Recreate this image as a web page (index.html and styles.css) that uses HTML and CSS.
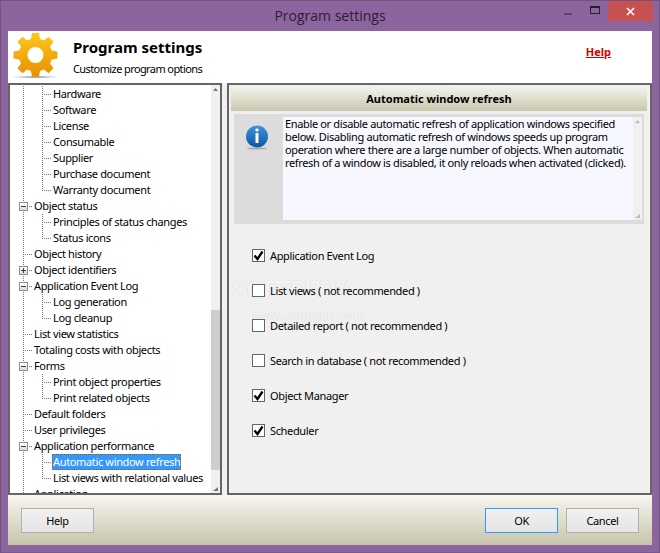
FILE: index.html
```html
<!DOCTYPE html>
<html>
<head>
<meta charset="utf-8">
<title>Program settings</title>
<link rel="stylesheet" href="styles.css">
</head>
<body>
<div class="window">
  <div class="titlebar">
    <div class="title">Program settings</div>
    <div class="controls">
      <div class="ctl"><svg width="10" height="10"><rect x="0" y="7" width="8" height="2" fill="#5b4a66"/></svg></div>
      <div class="ctl"><svg width="10" height="10"><rect x="0.5" y="0.5" width="9" height="7" fill="none" stroke="#222"/><rect x="0" y="0" width="10" height="2" fill="#222"/></svg></div>
      <div class="close"><svg width="9" height="9"><path d="M1 1L8 8M8 1L1 8" stroke="#fff" stroke-width="1.6"/></svg></div>
    </div>
  </div>
  <div class="client">
    <div class="header">
      <svg class="gear" width="48" height="48" viewBox="0 0 48 48">
        <defs>
          <linearGradient id="gg" x1="0" y1="0" x2="0" y2="1"><stop offset="0" stop-color="#ffc81a"/><stop offset="1" stop-color="#e88f00"/></linearGradient>
          <radialGradient id="sh"><stop offset="0" stop-color="#777"/><stop offset="1" stop-color="#ccc" stop-opacity="0.2"/></radialGradient>
        </defs>
        <ellipse cx="23.500" cy="45" rx="23" ry="1.600" fill="url(#sh)"/>
        <path fill="url(#gg)" fill-rule="evenodd" d="M20 1h7l1 6 4 1.600 4.500-3.900 5 5-3.500 4.800 1.700 4 5.800 1v7l-5.800 1-1.700 4 3.500 4.800-5 5-4.500-3.900-4 1.600-1 5.500h-7l-1-5.500-4-1.600-4.500 3.900-5-5 3.500-4.800-1.700-4-5.800-1v-7l5.800-1 1.700-4-3.500-4.800 5-5 4.500 3.900 4-1.600zM23.500 15a8 8 0 1 0 0 16 8 8 0 0 0 0-16z"/>
      </svg>
      <div class="head-text">
        <div class="head-title">Program settings</div>
        <div class="head-sub">Customize program options</div>
      </div>
      <a class="head-help">Help</a>
    </div>
    <div class="panes">
      <div class="tree-pane">
        <div class="tree">
          <div class="row"><i class="c v"></i><i class="c t"></i><span class="lb">Hardware</span></div>
          <div class="row"><i class="c v"></i><i class="c t"></i><span class="lb">Software</span></div>
          <div class="row"><i class="c v"></i><i class="c t"></i><span class="lb">License</span></div>
          <div class="row"><i class="c v"></i><i class="c t"></i><span class="lb">Consumable</span></div>
          <div class="row"><i class="c v"></i><i class="c t"></i><span class="lb">Supplier</span></div>
          <div class="row"><i class="c v"></i><i class="c t"></i><span class="lb">Purchase document</span></div>
          <div class="row"><i class="c v"></i><i class="c l"></i><span class="lb">Warranty document</span></div>
          <div class="row"><i class="c t"><b class="box minus"></b></i><span class="lb">Object status</span></div>
          <div class="row"><i class="c v"></i><i class="c t"></i><span class="lb">Principles of status changes</span></div>
          <div class="row"><i class="c v"></i><i class="c l"></i><span class="lb">Status icons</span></div>
          <div class="row"><i class="c t"></i><span class="lb">Object history</span></div>
          <div class="row"><i class="c t"><b class="box plus"></b></i><span class="lb">Object identifiers</span></div>
          <div class="row"><i class="c t"><b class="box minus"></b></i><span class="lb">Application Event Log</span></div>
          <div class="row"><i class="c v"></i><i class="c t"></i><span class="lb">Log generation</span></div>
          <div class="row"><i class="c v"></i><i class="c l"></i><span class="lb">Log cleanup</span></div>
          <div class="row"><i class="c t"></i><span class="lb">List view statistics</span></div>
          <div class="row"><i class="c t"></i><span class="lb">Totaling costs with objects</span></div>
          <div class="row"><i class="c t"><b class="box minus"></b></i><span class="lb">Forms</span></div>
          <div class="row"><i class="c v"></i><i class="c t"></i><span class="lb">Print object properties</span></div>
          <div class="row"><i class="c v"></i><i class="c l"></i><span class="lb">Print related objects</span></div>
          <div class="row"><i class="c t"></i><span class="lb">Default folders</span></div>
          <div class="row"><i class="c t"></i><span class="lb">User privileges</span></div>
          <div class="row"><i class="c t"><b class="box minus"></b></i><span class="lb">Application performance</span></div>
          <div class="row"><i class="c v"></i><i class="c t"></i><span class="lb sel">Automatic window refresh</span></div>
          <div class="row"><i class="c v"></i><i class="c l"></i><span class="lb">List views with relational values</span></div>
          <div class="row"><i class="c t"></i><span class="lb">Application</span></div>
        </div>
        <div class="vscroll">
          <svg class="arrow" width="9" height="9"><path d="M2 6L4.500 3L7 6z" fill="#777"/></svg>
          <div class="track"><div class="thumb"></div></div>
          <svg class="arrow" width="9" height="9"><path d="M2 7L7 3L7 7z" fill="#777"/></svg>
        </div>
      </div>
      <div class="page">
        <div class="page-title">Automatic window refresh</div>
        <div class="info">
          <div class="info-icon">
            <svg width="24" height="25" viewBox="0 0 24 25">
              <defs>
                <linearGradient id="ib" x1="0" y1="0" x2="0" y2="1"><stop offset="0" stop-color="#3f94dc"/><stop offset="1" stop-color="#0b57a4"/></linearGradient>
              </defs>
              <ellipse cx="12" cy="23.500" rx="10" ry="1" fill="#aaa"/>
              <circle cx="12" cy="11.500" r="11" fill="url(#ib)"/>
              <rect x="10.500" y="3.500" width="3" height="3" rx="1" fill="#fff"/>
              <rect x="10.500" y="8" width="3" height="10" fill="#fff"/>
            </svg>
          </div>
          <div class="info-text">Enable or disable automatic refresh of application windows specified below. Disabling automatic refresh of windows speeds up program operation where there are a large number of objects. When automatic refresh of a window is disabled, it only reloads when activated (clicked).</div>
          <div class="info-scroll">
            <svg width="9" height="9"><path d="M2 6L4.500 3L7 6z" fill="#bbb"/></svg>
            <svg width="9" height="9"><path d="M2 7L7 3L7 7z" fill="#bbb"/></svg>
          </div>
        </div>
        <div class="checks">
          <div class="check"><span class="cb"><svg width="11" height="11"><path d="M1.500 5.500L4.500 9L9.500 1.500" fill="none" stroke="#000" stroke-width="2.300"/></svg></span>Application Event Log</div>
          <div class="check"><span class="cb"></span>List views ( not recommended )</div>
          <div class="check"><span class="cb"></span>Detailed report ( not recommended )</div>
          <div class="check"><span class="cb"></span>Search in database ( not recommended )</div>
          <div class="check"><span class="cb"><svg width="11" height="11"><path d="M1.500 5.500L4.500 9L9.500 1.500" fill="none" stroke="#000" stroke-width="2.300"/></svg></span>Object Manager</div>
          <div class="check"><span class="cb"><svg width="11" height="11"><path d="M1.500 5.500L4.500 9L9.500 1.500" fill="none" stroke="#000" stroke-width="2.300"/></svg></span>Scheduler</div>
        </div>
        <div class="watermark">SOFTPEDIA<span class="wm-url">www.softpedia.com</span></div>
      </div>
    </div>
    <div class="footer">
      <button class="btn">Help</button>
      <div class="spacer"></div>
      <button class="btn default">OK</button>
      <button class="btn">Cancel</button>
    </div>
  </div>
</div>
</body>
</html>
```
FILE: styles.css
```css
html, body { margin: 0; padding: 0; }
body { width: 660px; height: 553px; overflow: hidden; font-family: "Noto Sans", sans-serif; font-size: 11px; letter-spacing: -0.35px; color: #000; }
.window { box-sizing: border-box; width: 660px; height: 553px; background: #8c659f; border: 1px solid #6f5580; border-bottom-color: #7a5a8c; padding: 0 7px 7px 7px; display: flex; flex-direction: column; }
.titlebar { height: 30px; flex: none; display: flex; align-items: flex-start; justify-content: center; position: relative; }
.title { font-family: "Open Sans", sans-serif; font-size: 14px; letter-spacing: 0; color: #2b2130; line-height: 29px; }
.controls { position: absolute; right: -1px; top: 0; display: flex; align-items: center; height: 20px; }
.ctl { width: 26px; height: 20px; display: flex; align-items: center; justify-content: center; }
.close { width: 45px; height: 20px; background: #c75050; display: flex; align-items: center; justify-content: center; }
.client { flex: 1; display: flex; flex-direction: column; background: #fff; min-height: 0; }
.header { height: 52px; flex: none; background: #fff; display: flex; align-items: flex-start; }
.gear { margin: 1px 0 0 4px; flex: none; }
.head-text { margin-left: 13px; padding-top: 6px; }
.head-title { font-size: 15px; font-weight: bold; letter-spacing: 0; line-height: 20px; }
.head-sub { margin-top: 5px; line-height: 14px; letter-spacing: -0.6px; }
.head-help { margin-left: auto; margin-right: 41px; margin-top: 13px; color: #d40000; font-weight: bold; letter-spacing: 0; line-height: 15px; text-decoration: underline; }
.panes { flex: 1; display: flex; min-height: 0; background: #f0f0f0; }
.tree-pane { width: 214px; box-sizing: border-box; border: 2px solid #666; background: #fff; display: flex; flex: none; overflow: hidden; }
.tree { flex: 1; padding: 1px 0 0 4px; overflow: hidden; }
.row { display: flex; height: 16px; white-space: nowrap; }
.c { display: block; width: 19px; height: 16px; flex: none; padding: 4px 0 0 5px; box-sizing: border-box; --dots: repeating-linear-gradient(to bottom, #777 0 1px, transparent 1px 2px); --hdots: repeating-linear-gradient(to right, #777 0 1px, transparent 1px 2px); background-repeat: no-repeat; }
.c.v { background-image: var(--dots); background-size: 1px 16px; background-position: 9px 0; }
.c.t { background-image: var(--dots), var(--hdots); background-size: 1px 16px, 10px 1px; background-position: 9px 0, 9px 8px; }
.c.l { background-image: var(--dots), var(--hdots); background-size: 1px 9px, 10px 1px; background-position: 9px 0, 9px 8px; }
.box { display: block; width: 9px; height: 9px; box-sizing: border-box; border: 1px solid #8e8f8f; background: linear-gradient(#fff, #dcdcdc); }
.box.minus { background: linear-gradient(#353a6f, #353a6f) center/5px 1px no-repeat, linear-gradient(#fff, #dcdcdc); }
.box.plus { background: linear-gradient(#353a6f, #353a6f) center/5px 1px no-repeat, linear-gradient(#353a6f, #353a6f) center/1px 5px no-repeat, linear-gradient(#fff, #dcdcdc); }
.lb { padding: 0 1px; line-height: 16px; height: 16px; box-sizing: border-box; }
.lb.sel { background: #3399ff; color: #fff; outline: 1px dotted #a85a00; outline-offset: -1px; }
.vscroll { width: 9px; flex: none; background: #f0f0f0; display: flex; flex-direction: column; }
.arrow { flex: none; display: block; }
.track { flex: 1; padding-top: 216px; }
.thumb { height: 160px; background: #cdcdcd; }
.page { flex: 1; margin-left: 5px; border: 2px solid #666; background: #f0f0f0; padding: 2px 0 0 2px; position: relative; overflow: hidden; }
.page-title { height: 24px; margin-right: 3px; font-weight: bold; letter-spacing: 0; text-align: center; line-height: 24px; background: linear-gradient(#f3f2ea, #c8c7ae); }
.info { height: 110px; margin: 3px 6px 0 3px; background: #dcdcdc; padding: 3px 2px 4px 0; box-sizing: border-box; display: flex; }
.info-icon { width: 49px; flex: none; padding-top: 8px; padding-left: 11px; box-sizing: border-box; }
.info-text { flex: 1; background: #f7f8ff; padding: 0 2px; line-height: 13px; }
.info-scroll { width: 9px; flex: none; background: #f0f0f0; display: flex; flex-direction: column; justify-content: space-between; }
.checks { display: flex; flex-direction: column; gap: 22px; padding: 25px 0 0 21px; position: relative; z-index: 1; }
.check { display: flex; align-items: center; height: 13px; }
.cb { width: 13px; height: 13px; box-sizing: border-box; border: 1px solid #666; background: #fff; margin-right: 5px; display: flex; align-items: center; justify-content: center; flex: none; }
.watermark { position: absolute; left: 3px; top: 193px; font-family: "Liberation Sans", sans-serif; font-size: 24px; line-height: 24px; font-weight: bold; letter-spacing: -1.5px; color: rgba(255,255,255,0.8); text-shadow: 0 0 1px rgba(0,0,0,0.18); pointer-events: none; }
.wm-url { display: block; font-size: 12px; line-height: 14px; letter-spacing: 0; margin: 7px 0 0 21px; }
.footer { height: 50px; flex: none; display: flex; align-items: center; padding: 0 13px; gap: 8px; background: linear-gradient(#f8f6f0, #c6c4aa); }
.spacer { flex: 1; }
.btn { width: 73px; height: 25px; box-sizing: border-box; border: 1px solid #acacac; background: linear-gradient(#f0f0f0, #e5e5e5); font-family: inherit; font-size: 11px; letter-spacing: inherit; color: #000; padding: 0; outline: 1px solid #b0b0b0; outline-offset: -1px; }
.btn.default { border-color: #3399ff; outline-color: #3399ff; }
```
